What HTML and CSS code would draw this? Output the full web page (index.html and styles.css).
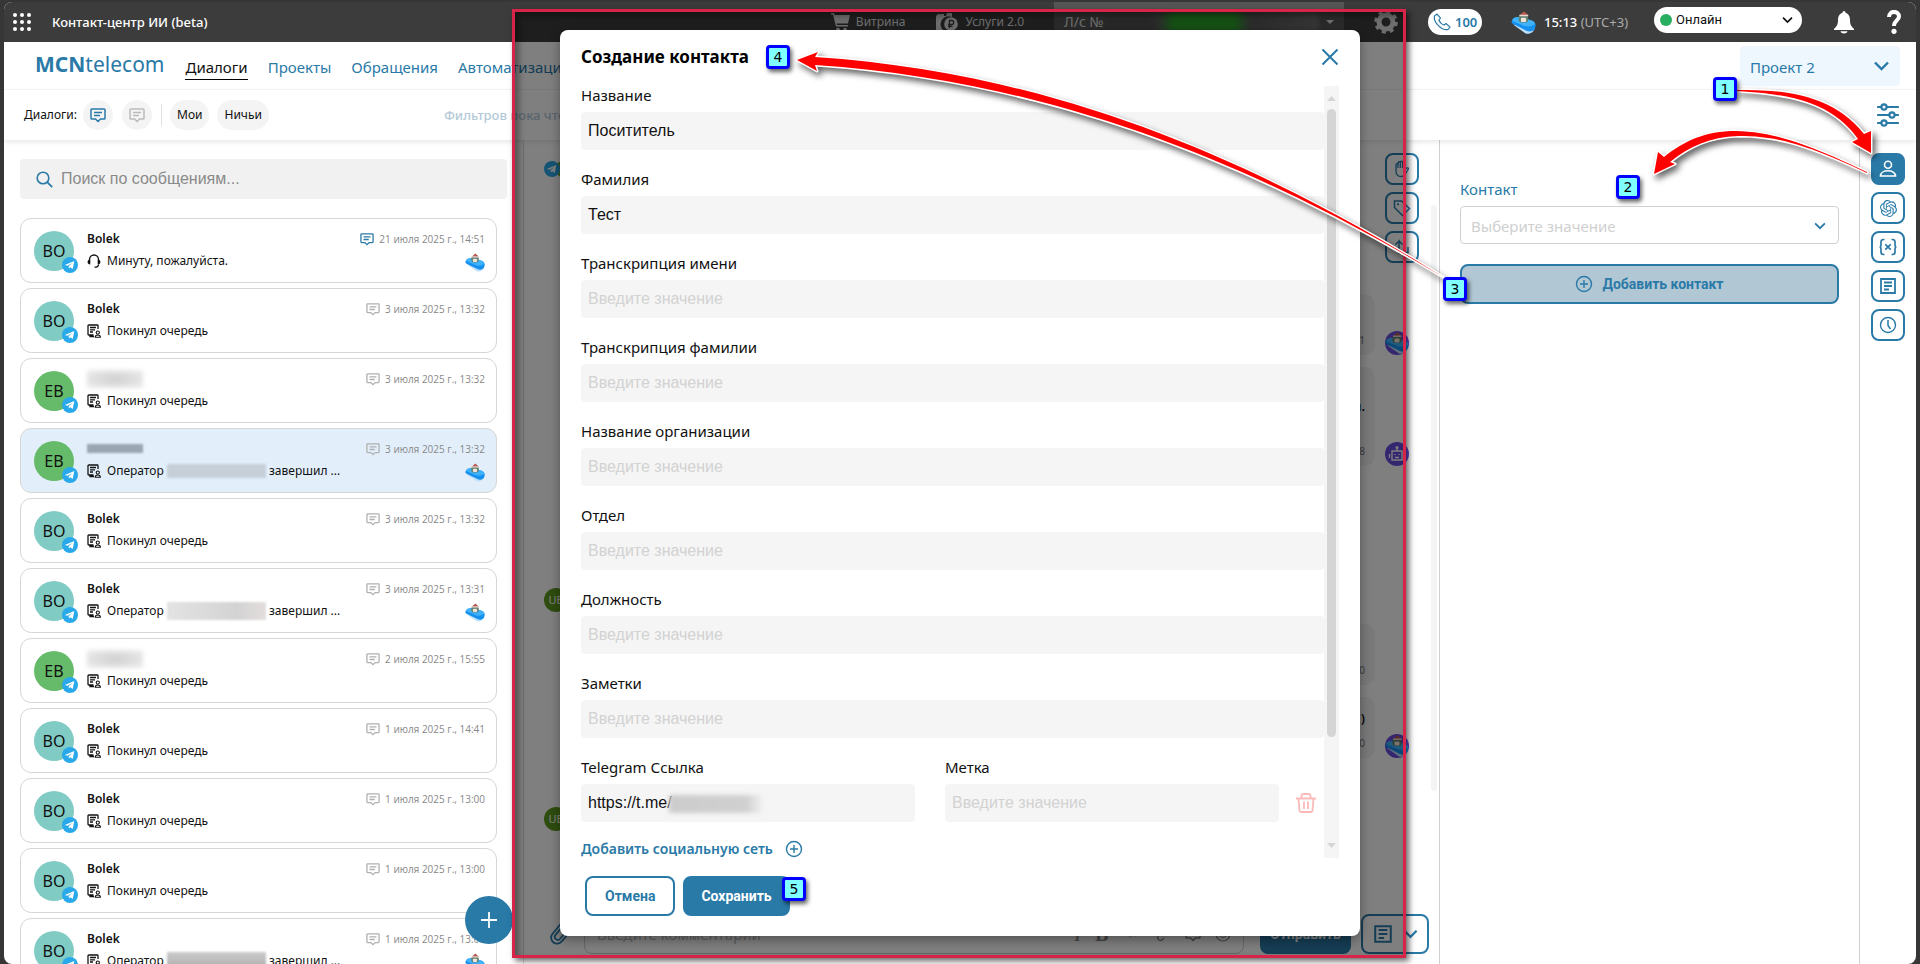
FILE: index.html
```html
<!DOCTYPE html>
<html lang="ru">
<head>
<meta charset="utf-8">
<title>Контакт-центр ИИ (beta)</title>
<link rel="stylesheet" href="styles.css">
</head>
<body>
<svg class="sprite" aria-hidden="true">
  <symbol id="chat" viewBox="0 0 16 15"><path d="M1.8 1h12.4a.8.8 0 0 1 .8.8v8.4a.8.8 0 0 1-.8.8H10.500L8 13.500 5.500 11H1.800a.8.8 0 0 1-.8-.8V1.800a.8.8 0 0 1 .8-.8zM4 4.500h8M4 7.500h6" fill="none" stroke="currentColor" stroke-width="1.500"/></symbol>
  <symbol id="tg" viewBox="0 0 16 16"><circle cx="8" cy="8" r="8" fill="#29a9ea"/><path d="M2.800 7.900 12.300 4 10.700 12 8.200 10.200 6.900 11.500 6.700 9.200 10.300 5.900 5.600 8.800z" fill="#fff"/></symbol>
  <symbol id="note" viewBox="0 0 14 14"><path d="M6.500 11H1.800a.8.8 0 0 1-.8-.8V1.800A.8.800 0 0 1 1.800 1h8.400a.8.800 0 0 1 .8.800V5M3 3.500h6M3 5.800h5M3 8h3M3 11v1.500h4" fill="none" stroke="currentColor" stroke-width="1.300"/><circle cx="10.800" cy="8.600" r="1.600" fill="none" stroke="currentColor" stroke-width="1.100"/><path d="M8.200 13.300c0-3 5.200-3 5.200 0z" fill="none" stroke="currentColor" stroke-width="1.100"/></symbol>
  <symbol id="head" viewBox="0 0 14 14"><path d="M2.500 9.500V5.500a4.500 4.500 0 0 1 9 0v4M11.500 10.500c0 1.800-1.500 2.700-4 2.700" fill="none" stroke="currentColor" stroke-width="1.300"/><path d="M3.200 5.500v5C1.500 10.500.6 9.500.6 8s.9-2.500 2.600-2.500zM10.800 5.500v5c1.700 0 2.600-1 2.600-2.500s-.9-2.500-2.600-2.500z" fill="currentColor"/></symbol>
  <symbol id="cloud" viewBox="0 0 24 22"><path d="M2 13l12 8.500c4 1 8-1 9-6z" fill="#bfe0fb"/><path d="M1 9C2 6 6 5.500 9 6l11 3c4 1.500 4.500 5 2.500 8.500-2 2.500-6 3-9.500.5L3 13C.5 12 0 11 1 9z" fill="#1590ee"/><path d="M1 9C2 6 6 5.500 9 6l11 3c2 1 3 2 3 3.500-3 2.500-7 3-11 1.500C8 12 4 11 1 9z" fill="#3fb2fb"/><rect x="7.500" y="3.500" width="9" height="7.500" rx="3" fill="#5d7f6c"/><rect x="9.500" y="6.500" width="5" height="4" rx="1" fill="#f1e3da"/><path d="M8 4 12.500.3l4.200 3.700z" fill="#b8564e"/><path d="M8 3.600h8.500v1.500H8z" fill="#e9d6d0"/></symbol>
  <symbol id="chev" viewBox="0 0 16 10"><path d="M1.500 1.500 8 8l6.500-6.500" fill="none" stroke="currentColor" stroke-width="2.400"/></symbol>
  <symbol id="plusc" viewBox="0 0 18 18"><circle cx="9" cy="9" r="7.500" fill="none" stroke="currentColor" stroke-width="1.400"/><path d="M9 5v8M5 9h8" stroke="currentColor" stroke-width="1.400"/></symbol>
  <symbol id="doc" viewBox="0 0 18 18"><path d="M2 2h14v14H2zM5 5.500h8M5 9h8M5 12.500h5" fill="none" stroke="currentColor" stroke-width="1.800"/></symbol>
</svg>

<div class="app">
  <header class="topbar">
    <button class="plain apps" aria-label="Приложения"><svg width="18" height="18" viewBox="0 0 18 18" fill="#fff"><circle cx="2" cy="2" r="2"/><circle cx="9" cy="2" r="2"/><circle cx="16" cy="2" r="2"/><circle cx="2" cy="9" r="2"/><circle cx="9" cy="9" r="2"/><circle cx="16" cy="9" r="2"/><circle cx="2" cy="16" r="2"/><circle cx="9" cy="16" r="2"/><circle cx="16" cy="16" r="2"/></svg></button>
    <span class="product">Контакт-центр ИИ (beta)</span>
    <div class="topright">
      <a class="toplink" href="#"><svg width="20" height="19" viewBox="0 0 20 19" fill="#ddd"><path d="M0 0h3l.6 2H19L17 10.500H5.500l.4 1.500H17v1.500H5L2 1.500H0z"/><circle cx="7" cy="16.500" r="1.800"/><circle cx="14" cy="16.500" r="1.800"/></svg>Витрина</a>
      <a class="toplink services" href="#"><svg width="22" height="20" viewBox="0 0 22 20"><path d="M0 4 2 2h6v2h2l1-3h5v4a8 8 0 0 0-9 13H0z" fill="#ddd"/><circle cx="15" cy="12" r="6.800" fill="#ddd"/><path d="M13.500 16V8.500h2.200a1.900 1.900 0 0 1 0 4H12M12 14.300h4.500" fill="none" stroke="#3c3c3c" stroke-width="1.300"/></svg>Услуги 2.0</a>
      <button class="account">Л/с №<span class="masked"></span><svg width="8" height="4" viewBox="0 0 8 4"><path d="M0 0h8L4 4z" fill="#ddd"/></svg></button>
      <button class="plain gear" aria-label="Настройки"><svg width="24" height="24" viewBox="0 0 24 24"><g fill="none" stroke="#ddd"><circle cx="12" cy="12" r="7" stroke-width="5"/><circle cx="12" cy="12" r="10.300" stroke-width="3" stroke-dasharray="4.100 4" /></g></svg></button>
      <button class="phone"><svg width="18" height="18" viewBox="0 0 18 18"><path d="M1.500 3 4 1l3.500 4L6 7c.5 2 3 4.500 5 5l2-1.500L17 14l-2 2.500C9 18 0 9 1.500 3z" fill="none" stroke="currentColor" stroke-width="1.200"/></svg>100</button>
      <svg class="weather" width="25" height="23"><use href="#cloud"/></svg>
      <span class="clock">15:13 <span>(UTC+3)</span></span>
      <div class="status"><i></i><select aria-label="Статус"><option>Онлайн</option></select><svg width="11" height="8"><use href="#chev"/></svg></div>
      <button class="plain bell" aria-label="Уведомления"><svg width="20" height="23" viewBox="0 0 20 23" fill="#fff"><path d="M10 0c1 0 1.500.8 1.500 1.800C15 3 16 6 16 9c0 5 1.500 6.500 4 9v1H0v-1c2.500-2.500 4-4 4-9 0-3 1-6 4.500-7.200C8.500.8 9 0 10 0zM6.500 20.300h7c-.5 3-6.500 3-7 0z"/></svg></button>
      <button class="plain help" aria-label="Помощь"><svg width="14" height="24" viewBox="0 0 14 24"><path d="M2 7C2 0 12 .5 12 6.500c0 4-5 4-5 9.500" fill="none" stroke="#fff" stroke-width="4"/><circle cx="7" cy="21.300" r="2.600" fill="#fff"/></svg></button>
    </div>
  </header>

  <div class="navbar">
    <a class="logo" href="#"><b>MCN</b>telecom</a>
    <nav>
      <a class="current" href="#">Диалоги</a><a href="#">Проекты</a><a href="#">Обращения</a><a href="#">Автоматизация</a>
    </nav>
    <div class="project"><select aria-label="Проект"><option>Проект 2</option></select><svg width="17" height="10"><use href="#chev"/></svg></div>
  </div>

  <div class="filterbar">
    <span class="flabel">Диалоги:</span>
    <button class="round blue" aria-label="Открытые"><svg width="16" height="15"><use href="#chat"/></svg></button>
    <button class="round" aria-label="Закрытые"><svg width="16" height="15"><use href="#chat"/></svg></button>
    <span class="sep"></span>
    <button class="chip">Мои</button>
    <button class="chip">Ничьи</button>
    <span class="nofilters">Фильтров пока что нет</span>
    <button class="plain sliders" aria-label="Фильтры"><svg width="22" height="24" viewBox="0 0 22 24"><g fill="#fff" stroke="currentColor" stroke-width="2.200"><path d="M1 4h20M1 12h20M1 20h20" stroke-linecap="round"/><circle cx="7" cy="4" r="2.600"/><circle cx="15" cy="12" r="2.600"/><circle cx="7" cy="20" r="2.600"/></g></svg></button>
  </div>

  <main>
    <aside class="sidebar">
      <label class="search"><svg width="17" height="17" viewBox="0 0 17 17"><circle cx="7" cy="7" r="5.800" fill="none" stroke="currentColor" stroke-width="1.600"/><path d="m11.200 11.200 5 5" stroke="currentColor" stroke-width="1.800"/></svg><input type="search" placeholder="Поиск по сообщениям..." aria-label="Поиск по сообщениям"></label>
      <ul class="dialogs">
        <li class="open"><span class="ava">BO<svg><use href="#tg"/></svg></span><div class="info"><b>Bolek</b><p><svg><use href="#head"/></svg>Минуту, пожалуйста.</p></div><div class="meta"><time><svg><use href="#chat"/></svg>21 июля 2025 г., 14:51</time><svg class="cl"><use href="#cloud"/></svg></div></li>
        <li><span class="ava">BO<svg><use href="#tg"/></svg></span><div class="info"><b>Bolek</b><p><svg><use href="#note"/></svg>Покинул очередь</p></div><div class="meta"><time><svg><use href="#chat"/></svg>3 июля 2025 г., 13:32</time></div></li>
        <li><span class="ava green">EB<svg><use href="#tg"/></svg></span><div class="info"><b class="hid"></b><p><svg><use href="#note"/></svg>Покинул очередь</p></div><div class="meta"><time><svg><use href="#chat"/></svg>3 июля 2025 г., 13:32</time></div></li>
        <li class="active"><span class="ava green">EB<svg><use href="#tg"/></svg></span><div class="info"><b class="hid dark"></b><p><svg><use href="#note"/></svg>Оператор <i></i> завершил ...</p></div><div class="meta"><time><svg><use href="#chat"/></svg>3 июля 2025 г., 13:32</time><svg class="cl"><use href="#cloud"/></svg></div></li>
        <li><span class="ava">BO<svg><use href="#tg"/></svg></span><div class="info"><b>Bolek</b><p><svg><use href="#note"/></svg>Покинул очередь</p></div><div class="meta"><time><svg><use href="#chat"/></svg>3 июля 2025 г., 13:32</time></div></li>
        <li><span class="ava">BO<svg><use href="#tg"/></svg></span><div class="info"><b>Bolek</b><p><svg><use href="#note"/></svg>Оператор <i></i> завершил ...</p></div><div class="meta"><time><svg><use href="#chat"/></svg>3 июля 2025 г., 13:31</time><svg class="cl"><use href="#cloud"/></svg></div></li>
        <li><span class="ava green">EB<svg><use href="#tg"/></svg></span><div class="info"><b class="hid"></b><p><svg><use href="#note"/></svg>Покинул очередь</p></div><div class="meta"><time><svg><use href="#chat"/></svg>2 июля 2025 г., 15:55</time></div></li>
        <li><span class="ava">BO<svg><use href="#tg"/></svg></span><div class="info"><b>Bolek</b><p><svg><use href="#note"/></svg>Покинул очередь</p></div><div class="meta"><time><svg><use href="#chat"/></svg>1 июля 2025 г., 14:41</time></div></li>
        <li><span class="ava">BO<svg><use href="#tg"/></svg></span><div class="info"><b>Bolek</b><p><svg><use href="#note"/></svg>Покинул очередь</p></div><div class="meta"><time><svg><use href="#chat"/></svg>1 июля 2025 г., 13:00</time></div></li>
        <li><span class="ava">BO<svg><use href="#tg"/></svg></span><div class="info"><b>Bolek</b><p><svg><use href="#note"/></svg>Покинул очередь</p></div><div class="meta"><time><svg><use href="#chat"/></svg>1 июля 2025 г., 13:00</time></div></li>
        <li><span class="ava">BO<svg><use href="#tg"/></svg></span><div class="info"><b>Bolek</b><p><svg><use href="#note"/></svg>Оператор <i class="deep"></i> завершил ...</p></div><div class="meta"><time><svg><use href="#chat"/></svg>1 июля 2025 г., 13:00</time><svg class="cl"><use href="#cloud"/></svg></div></li>
      </ul>
      <button class="fab" aria-label="Новый диалог"><svg width="16" height="16" viewBox="0 0 16 16"><path d="M8 0v16M0 8h16" stroke="#fff" stroke-width="1.800"/></svg></button>
    </aside>

    <section class="chat">
      <div class="chathead">
        <svg class="src" width="32" height="16" viewBox="0 0 32 16"><circle cx="19" cy="8" r="8" fill="#6fa32a"/><use href="#tg" width="16" height="16"/></svg>
        <div class="tools">
          <button class="tool" aria-label="Взять"><svg width="18" height="18" viewBox="0 0 18 18"><path d="M3 9V4.500q1-1.500 2 0V8 2.500q1.200-1.500 2.300 0V8 2q1.200-1.500 2.300 0v6-5q1.200-1.500 2.300 0v6.500L13.500 8q2-.5 2 .8L12 14.500Q11 16.500 8.500 16.500 3 16.500 3 11z" fill="none" stroke="currentColor" stroke-width="1.300"/></svg></button>
          <button class="tool" aria-label="Метка"><svg width="18" height="18" viewBox="0 0 18 18"><path d="M1.500 2h7l8 7.500-7 7-8-8z" fill="none" stroke="currentColor" stroke-width="1.500"/><circle cx="5" cy="5.300" r="1.100" fill="currentColor"/></svg></button>
          <button class="tool" aria-label="Передать"><svg width="18" height="18" viewBox="0 0 18 18"><path d="M6 16V3L2.500 6.500M6 3l3.500 3.500M15 9v5.500H8" fill="none" stroke="currentColor" stroke-width="1.500"/></svg></button>
        </div>
      </div>
      <div class="messages">
        <div class="msg out"><p><small>1</small></p><span class="who"><svg><use href="#cloud"/></svg></span></div>
        <div class="msg out tall"><p><span>и.</span><small>8</small></p><span class="who bot"><svg viewBox="0 0 18 18"><path d="M4 6h10v9H4zM9 6V2.500M1.500 9v4M16.500 9v4M7 9v1M11 9v1M7 12.500h4" fill="none" stroke="#fff" stroke-width="1.400"/><circle cx="9" cy="2.500" r="1.500" fill="#fff"/></svg></span></div>
        <div class="msg in first"><span class="ub">UB</span></div>
        <div class="msg out"><p><small>0</small></p><span class="who none"></span></div>
        <div class="msg out"><p>)<small>0</small></p><span class="who"><svg><use href="#cloud"/></svg></span></div>
        <div class="msg in"><span class="ub">UB</span></div>
      </div>
      <div class="track"><b></b></div>
      <div class="composer">
        <button class="plain clip" aria-label="Вложение"><svg width="34" height="38" viewBox="0 0 34 38"><path transform="rotate(40 17 19)" d="M11 7v18a6 6 0 0 0 12 0V5a4.500 4.500 0 0 0-9 0v19a3 3 0 0 0 6 0V8" fill="none" stroke="currentColor" stroke-width="1.800"/></svg></button>
        <div class="entry"><input type="text" placeholder="Введите комментарий" aria-label="Комментарий"><i>I</i><b>B</b><span>&lt;/&gt;</span>
          <svg width="15" height="15" viewBox="0 0 15 15"><path d="M6 9 9 6M5 6 2 9q-1 3 1 4t3 0l2-2M10 9l3-3q1-3-1-4t-3 0L7 4" fill="none" stroke="currentColor" stroke-width="1.300"/></svg>
          <svg width="16" height="15"><use href="#chat"/></svg>
          <svg width="16" height="16" viewBox="0 0 16 16"><circle cx="8" cy="8" r="7" fill="none" stroke="currentColor" stroke-width="1.200"/><path d="M4.500 9.500q3.500 4 7 0zM5.500 5v1.500M10.500 5v1.500" fill="none" stroke="currentColor"/></svg></div>
        <button class="btn primary send">Отправить</button>
        <button class="btn tmpl" aria-label="Шаблоны"><svg width="20" height="20"><use href="#doc"/></svg><svg width="15" height="10"><use href="#chev"/></svg></button>
      </div>
    </section>

    <section class="contact">
      <label for="pick">Контакт</label>
      <div class="pick"><select id="pick"><option>Выберите значение</option></select><svg width="12" height="8"><use href="#chev"/></svg></div>
      <button class="btn add"><svg width="18" height="18"><use href="#plusc"/></svg>Добавить контакт</button>
    </section>

    <div class="rail">
      <button class="tool on" aria-label="Контакт"><svg width="18" height="18" viewBox="0 0 18 18"><circle cx="9" cy="4.800" r="3.500" fill="none" stroke="currentColor" stroke-width="1.600"/><path d="M1.500 16c0-7 15-7 15 0z" fill="none" stroke="currentColor" stroke-width="1.600"/></svg></button>
      <button class="tool" aria-label="ИИ"><svg width="17" height="17" viewBox="0 0 24 24" fill="currentColor"><path d="M22.2819 9.8211a5.9847 5.9847 0 0 0-.5157-4.9108 6.0462 6.0462 0 0 0-6.5098-2.9A6.0651 6.0651 0 0 0 4.9807 4.1818a5.9847 5.9847 0 0 0-3.9977 2.9 6.0462 6.0462 0 0 0 .7427 7.0966 5.98 5.98 0 0 0 .511 4.9107 6.051 6.051 0 0 0 6.5146 2.9001A5.9847 5.9847 0 0 0 13.2599 24a6.0557 6.0557 0 0 0 5.7718-4.2058 5.9894 5.9894 0 0 0 3.9977-2.9001 6.0557 6.0557 0 0 0-.7475-7.0729zm-9.022 12.6081a4.4755 4.4755 0 0 1-2.8764-1.0408l.1419-.0804 4.7783-2.7582a.7948.7948 0 0 0 .3927-.6813v-6.7369l2.02 1.1686a.071.071 0 0 1 .038.052v5.5826a4.504 4.504 0 0 1-4.4945 4.4944zm-9.6607-4.1254a4.4708 4.4708 0 0 1-.5346-3.0137l.142.0852 4.783 2.7582a.7712.7712 0 0 0 .7806 0l5.8428-3.3685v2.3324a.0804.0804 0 0 1-.0332.0615L9.74 19.9502a4.4992 4.4992 0 0 1-6.1408-1.6464zM2.3408 7.8956a4.485 4.485 0 0 1 2.3655-1.9728V11.6a.7664.7664 0 0 0 .3879.6765l5.8144 3.3543-2.0201 1.1685a.0757.0757 0 0 1-.071 0l-4.8303-2.7865A4.504 4.504 0 0 1 2.3408 7.872zm16.5963 3.8558L13.1038 8.364 15.1192 7.2a.0757.0757 0 0 1 .071 0l4.8303 2.7913a4.4944 4.4944 0 0 1-.6765 8.1042v-5.6772a.79.79 0 0 0-.407-.667zm2.0107-3.0231l-.142-.0852-4.7735-2.7818a.7759.7759 0 0 0-.7854 0L9.409 9.2297V6.8974a.0662.0662 0 0 1 .0284-.0615l4.8303-2.7866a4.4992 4.4992 0 0 1 6.6802 4.66zM8.3065 12.863l-2.02-1.1638a.0804.0804 0 0 1-.038-.0567V6.0742a4.4992 4.4992 0 0 1 7.3757-3.4537l-.142.0805L8.704 5.459a.7948.7948 0 0 0-.3927.6813zm1.0976-2.3654l2.602-1.4998 2.6069 1.4998v2.9994l-2.5974 1.4997-2.6067-1.4997Z"/></svg></button>
      <button class="tool" aria-label="Переменные"><svg width="18" height="18" viewBox="0 0 18 18"><path d="M5.500 1.500H4.500q-2.500 0-2.500 2.500v3q0 1-.7 2 .7 1 .7 2v3q0 2.500 2.500 2.500h1M12.500 1.500h1q2.500 0 2.500 2.500v3q0 1 .7 2-.7 1-.7 2v3q0 2.500-2.500 2.500h-1M6.300 6.300l5.400 5.400M11.700 6.300l-5.400 5.400" fill="none" stroke="currentColor" stroke-width="1.700"/></svg></button>
      <button class="tool" aria-label="Заметки"><svg width="18" height="18"><use href="#doc"/></svg></button>
      <button class="tool" aria-label="История"><svg width="18" height="18" viewBox="0 0 18 18"><path d="M9 4v5.500l2.500 3.500" fill="none" stroke="currentColor" stroke-width="1.500"/><circle cx="9" cy="9" r="7.500" fill="none" stroke="currentColor" stroke-width="1.400"/></svg></button>
    </div>
  </main>
</div>

<div class="shade"></div>

<div class="layer">
  <form class="modal" role="dialog" aria-labelledby="mt">
    <div class="mhead"><h1 id="mt">Создание контакта</h1><button type="button" class="plain" aria-label="Закрыть"><svg width="18" height="18" viewBox="0 0 18 18"><path d="m1.500 1.500 15 15M16.500 1.500l-15 15" stroke="currentColor" stroke-width="2"/></svg></button></div>
    <div class="mbody">
      <div class="fields">
        <label>Название<input value="Посититель"></label>
        <label>Фамилия<input value="Тест"></label>
        <label>Транскрипция имени<input placeholder="Введите значение"></label>
        <label>Транскрипция фамилии<input placeholder="Введите значение"></label>
        <label>Название организации<input placeholder="Введите значение"></label>
        <label>Отдел<input placeholder="Введите значение"></label>
        <label>Должность<input placeholder="Введите значение"></label>
        <label>Заметки<input placeholder="Введите значение"></label>
        <div class="social">
          <label>Telegram Ссылка<span class="url"><input value="https://t.me/"><i></i></span></label>
          <label>Метка<input placeholder="Введите значение"></label>
          <button type="button" class="plain trash" aria-label="Удалить"><svg width="20" height="20" viewBox="0 0 20 20"><path d="M0 5.500h20M5.500 5V3q0-2 2-2h5q2 0 2 2v2M2.500 6l1 11.500q.1 1.500 1.500 1.500h10q1.400 0 1.500-1.500l1-11.500M8 8.500V16M12 8.500V16" fill="none" stroke="currentColor" stroke-width="1.800"/></svg></button>
        </div>
        <button type="button" class="plain more">Добавить социальную сеть<svg width="18" height="18"><use href="#plusc"/></svg></button>
      </div>
      <div class="bar"><svg width="9" height="5" viewBox="0 0 9 5"><path d="M0 5h9L4.500 0z" fill="#d5d5d5"/></svg><b></b><svg width="9" height="5" viewBox="0 0 9 5"><path d="M0 0h9L4.500 5z" fill="#d5d5d5"/></svg></div>
    </div>
    <div class="mfoot"><button type="button" class="btn">Отмена</button><button type="button" class="btn primary">Сохранить</button></div>
  </form>
</div>

<div class="notes">
  <svg width="1920" height="400" viewBox="0 0 1920 400" aria-hidden="true"><g fill="#f00" stroke="#fff" stroke-width="3" paint-order="stroke" stroke-linejoin="round">
    <path d="M1737 90C1790 89 1835 97 1864 134L1871 131 1871 153 1852 142 1858 139C1832 102 1790 94 1737 91z"/>
    <path d="M1867 172C1800 140 1770 132 1736 131 1705 131 1684 141 1664 157L1658 152 1654 174 1675 164 1670 162C1690 146 1710 137 1738 136 1772 136 1800 141 1867 173z"/>
    <path d="M797 60 818 52 815 57C1040 72 1240 150 1443 277 1235 152 1035 80 815 65L817 71z"/>
  </g></svg>
  <span class="n1">1</span><span class="n2">2</span><span class="n3">3</span><span class="n4">4</span><span class="n5">5</span>
</div>
</body>
</html>
```

FILE: styles.css
```css
* { box-sizing: border-box; }
:root { --blue: #2a7aa8; }
body { margin: 0; height: 100vh; background: #363636; padding: 2px 4px 0; position: relative; overflow: hidden; font: 13px/18px "Noto Sans", sans-serif; color: #111; }
button, input, select { font: inherit; color: inherit; border: 0; margin: 0; padding: 0; outline: 0; }
button { cursor: pointer; }
svg { flex: none; display: block; }
.sprite { position: absolute; width: 0; height: 0; }
select { appearance: none; background: none; }
.plain { background: none; display: flex; align-items: center; color: var(--blue); }
a { text-decoration: none; color: inherit; }

.app { height: 100%; display: flex; flex-direction: column; background: #fff; border-radius: 8px; overflow: hidden; }

/* top bar */
.topbar { height: 40px; background: #3c3c3c; display: flex; align-items: center; color: #fff; padding: 0 15px 0 9px; flex: none; }
.product { margin-left: 21px; font-weight: 500; }
.topright { margin-left: auto; display: flex; align-items: center; height: 100%; }
.toplink { display: flex; align-items: center; gap: 5px; color: #ddd; font-size: 12px; }
.services { margin: 0 30px 0 31px; gap: 7px; }
.account { height: 100%; width: 290px; background: #555; color: #ddd; display: flex; align-items: center; padding: 0 10px; font-size: 14px; }
.masked { flex: 1; height: 20px; margin: 0 7px 0 2px; filter: blur(2px); background: linear-gradient(90deg, #505050 20%, #575757 24%, #2aa02a 32%, #2aa02a 60%, #575757 68%, #6a6a6a); }
.gear { margin: 0 30px; }
.phone { width: 54px; height: 26px; border-radius: 13px; background: #fff; color: var(--blue); font-weight: 600; display: flex; align-items: center; gap: 4px; padding: 0 5px; }
.weather { margin: 0 8px 0 29px; }
.clock { width: 110px; color: #fff; font-size: 13px; font-weight: 500; }
.clock span { color: #aaa; font-weight: 400; }
.status { position: relative; width: 148px; height: 26px; margin-bottom: 4px; background: #fff; border-radius: 13px; color: #111; font-family: Roboto, sans-serif; }
.status select { width: 100%; height: 100%; padding-left: 22px; }
.status i { position: absolute; left: 6px; top: 7px; width: 12px; height: 12px; border-radius: 50%; background: #27ae60; }
.status svg { position: absolute; right: 9px; top: 9px; }
.bell { margin: 0 33px 0 32px; }

/* navigation */
.navbar { display: flex; align-items: center; height: 48px; padding: 4px 16px 4px 31px; border-bottom: 1px solid #f7f7f7; color: var(--blue); flex: none; }
.logo { font-size: 21px; line-height: 28px; margin-bottom: 4px; }
nav { display: flex; gap: 20px; margin-left: 21px; font-size: 15px; padding-top: 4px; }
nav a { line-height: 24px; border-bottom: 1px solid transparent; }
nav .current { color: #111; border-color: #000; }
.project { margin-left: auto; position: relative; width: 160px; height: 40px; background: #eff7fe; border-radius: 4px; }
.project select { width: 100%; height: 100%; padding: 3px 10px 0; font-size: 15px; }
.project svg { position: absolute; right: 10px; top: 15px; }

.filterbar { display: flex; align-items: center; height: 50px; padding: 0 17px 0 20px; box-shadow: 0 2px 5px rgba(0,0,0,.1); position: relative; flex: none; font-size: 12px; }
.flabel { width: 59px; }
.round { width: 30px; height: 30px; border-radius: 50%; background: #f4f4f4; display: flex; align-items: center; justify-content: center; color: #bbb; margin-right: 9px; }
.round.blue { color: var(--blue); }
.sep { width: 1px; height: 22px; background: #e2e2e2; margin-right: 8px; }
.chip { height: 30px; padding: 0 7px; border-radius: 15px; background: #f4f4f4; margin-right: 8px; }
.nofilters { margin-left: 167px; color: #b3c9d8; font-size: 13px; font-weight: 500; }
.sliders { margin-left: auto; }

main { flex: 1; min-height: 0; display: flex; }

/* dialog list */
.sidebar { width: 519px; padding: 19px 15px 0 16px; position: relative; overflow: hidden; flex: none; }
.search { display: flex; align-items: center; gap: 8px; height: 40px; padding: 0 16px; background: #f1f1f1; border-radius: 4px; color: var(--blue); font: 16px "Liberation Sans", Arial, sans-serif; margin-right: 1px; }
.search input { flex: 1; background: none; color: #777; }
.search input::placeholder { color: #8a8a8a; }
.dialogs { list-style: none; margin: 19px 11px 0 0; padding: 0; display: flex; flex-direction: column; gap: 5px; }
.dialogs li { height: 65px; border: 1px solid #d6d6d6; border-radius: 11px; display: flex; padding: 11px 11px 0 13px; font-size: 12px; line-height: 18px; }
.dialogs .active { background: #e2effb; }
.ava { position: relative; width: 40px; height: 40px; border-radius: 50%; background: #80cbc4; font-size: 16px; line-height: 40px; text-align: center; margin-top: 1px; flex: none; }
.ava.green { background: #66bb6a; }
.ava svg { position: absolute; right: -4px; bottom: -2px; width: 16px; height: 16px; }
.info { flex: 1; padding-left: 13px; }
.info b { display: block; font-weight: 600; margin-bottom: 4px; }
.info p { margin: 0; display: flex; align-items: center; white-space: pre; }
.info p svg { width: 14px; height: 14px; margin-right: 6px; }
.info i { width: 99px; height: 18px; background: linear-gradient(90deg, #e3e3e3, #d3d3d3 70%, #e3dddd); filter: blur(1px); }
.active .info i { background: #c6cfd8; height: 14px; }
.info i.deep { background: linear-gradient(#ccc, #aaa); }
.info .hid { width: 56px; height: 18px; background: radial-gradient(#d0d0d0, #eee); filter: blur(2px); }
.info .dark { height: 9px; margin: 4px 0 9px; background: #9aa7b3; filter: blur(1px); }
.meta { display: flex; flex-direction: column; align-items: flex-end; color: #888; font: 10px/18px "Open Sans", "Noto Sans", sans-serif; }
.meta time { display: flex; align-items: center; gap: 5px; }
.meta time svg { width: 14px; height: 13px; color: #b0b0b0; }
.open time svg { color: var(--blue); }
.meta .cl { width: 20px; height: 19px; margin-top: 5px; }
.fab { position: absolute; right: 10px; bottom: 20px; width: 48px; height: 48px; border-radius: 50%; background: var(--blue); display: flex; align-items: center; justify-content: center; }

/* conversation */
.chat { flex: 1; border-left: 1px solid #ddd; position: relative; display: flex; flex-direction: column; min-width: 0; }
.chathead { display: flex; justify-content: space-between; padding: 13px 20px 0 20px; }
.src { margin-top: 8px; }
.tools, .rail { display: flex; flex-direction: column; gap: 7px; }
.tool { width: 34px; height: 32px; border: 2px solid var(--blue); border-radius: 8px; background: #fff; color: var(--blue); display: flex; align-items: center; justify-content: center; }
.tool.on { background: var(--blue); color: #fff; }
.messages { padding: 31px 30px 0 20px; display: flex; flex-direction: column; gap: 12px; flex: 1; }
.msg { display: flex; align-items: flex-end; height: 61px; }
.msg.tall { height: 99px; }
.msg.first { height: 134px; }
.out { justify-content: flex-end; gap: 10px; }
.out p { margin: 0; width: 420px; height: 100%; border-radius: 10px; background: #f3f3f3; padding: 12px 10px 6px; text-align: right; display: flex; flex-direction: column; font-weight: 600; }
.tall p { padding-top: 30px; }
.out small { font-size: 10px; font-weight: 400; color: #777; line-height: 18px; margin-top: auto; }
.who, .ub { width: 24px; height: 24px; border-radius: 50%; background: #6b4ce0; display: flex; align-items: center; justify-content: center; overflow: hidden; flex: none; }
.who.none { background: none; }
.who svg { width: 24px; height: 22px; }
.bot svg { width: 18px; height: 18px; }
.ub { background: #5f9a1e; color: #fff; font-size: 11px; }
.track { position: absolute; right: 2px; top: 65px; width: 6px; height: 586px; }
.track b { display: block; height: 100%; border-radius: 3px; background: #f4f4f4; }
.composer { display: flex; align-items: flex-end; padding: 0 10px 10px 20px; }
.clip { width: 30px; height: 42px; }
.entry { flex: 1; height: 40px; margin: 0 16px 0 10px; border: 1px solid #ccc; border-radius: 8px; display: flex; align-items: center; gap: 14px; padding: 0 12px; color: #888; font: 20px "Liberation Serif", serif; }
.entry span { font-size: 14px; }
.entry input { flex: 1; min-width: 0; height: 30px; background: none; font: 15px "Noto Sans", sans-serif; }
.entry input::placeholder { color: #bbb; }
.btn { height: 40px; border: 2px solid var(--blue); border-radius: 8px; background: #fff; color: var(--blue); font: bold 14px Roboto, sans-serif; display: flex; align-items: center; justify-content: center; padding: 0 18px; }
.primary { background: var(--blue); color: #fff; padding: 0 16px; }
.send { width: 91px; padding: 0; margin-right: 10px; }
.tmpl { width: 68px; gap: 10px; padding: 0; }

/* contact panel */
.contact { width: 421px; border-left: 1px solid #d0d0d0; border-right: 1px solid #d0d0d0; padding: 37px 20px 0; color: var(--blue); flex: none; }
.contact label { display: block; font-size: 15px; line-height: 24px; margin-bottom: 5px; }
.pick { position: relative; height: 38px; margin-bottom: 20px; border: 1px solid #d0d0d0; border-radius: 4px; }
.pick select { width: 100%; height: 100%; padding: 2px 10px 0; font-size: 15px; color: #d0d0d0; }
.pick svg { position: absolute; right: 12px; top: 15px; }
.add { width: 100%; gap: 9px; background: #b2c7d4; }
.rail { padding: 13px 11px; }

/* dimmed area */
.shade { position: absolute; left: 512px; right: 514px; top: 9px; bottom: 6px; border: 3px solid #d9244a; background: rgba(0,0,0,.5); box-shadow: 3px 3px 6px rgba(0,0,0,.6), inset 4px 4px 6px rgba(0,0,0,.35); }

/* dialog window */
.layer { position: absolute; left: 0; right: 0; top: 30px; display: flex; justify-content: center; }
.modal { width: 800px; background: #fff; border-radius: 8px; padding: 0 21px 20px; box-shadow: 0 4px 12px rgba(0,0,0,.35); }
.mhead { display: flex; justify-content: space-between; align-items: center; height: 56px; padding-bottom: 2px; }
.mhead h1 { margin: 0; font-size: 17px; line-height: 24px; color: #000; }
.mbody { display: flex; height: 772px; }
.fields { flex: 1; min-width: 0; display: flex; flex-direction: column; gap: 20px; }
.fields label { display: flex; flex-direction: column; font-size: 15px; line-height: 18px; gap: 8px; }
.fields input { height: 38px; width: 100%; background: #f5f5f5; border-radius: 4px; padding: 0 7px; font: 16px "Liberation Sans", Arial, sans-serif; }
.fields input::placeholder { color: #d2d2d2; }
.social { display: grid; grid-template-columns: 334px 334px 15px; column-gap: 30px; align-items: end; }
.social .trash { height: 38px; color: #fbb9b9; margin-left: -13px; }
.url { position: relative; }
.url i { position: absolute; left: 88px; top: 11px; width: 96px; height: 18px; background: linear-gradient(90deg, #ccc, #d0d0d0 80%, #f5f5f5); filter: blur(2px); }
.more { gap: 12px; font-size: 14px; line-height: 18px; font-weight: 600; margin-top: -2px; }
.bar { width: 15px; flex: none; background: #f5f5f5; display: flex; flex-direction: column; align-items: center; padding: 10px 0; }
.bar b { width: 9px; height: 628px; border-radius: 5px; background: #d5d5d5; margin: 8px 0 auto; }
.mfoot { display: flex; gap: 8px; padding: 18px 4px 0; }

/* numbered callouts */
.notes { position: absolute; left: 0; top: 0; pointer-events: none; }
.notes svg { filter: drop-shadow(3px 4px 3px rgba(0,0,0,.6)); }
.notes span { position: absolute; width: 24px; height: 24px; border: 3px solid #00f; border-radius: 4px; background: #80ffff; color: #000; font: 14px/18px "DejaVu Sans", sans-serif; text-align: center; box-shadow: 2px 3px 4px rgba(0,0,0,.6); }
.notes .n1 { left: 1713px; top: 77px; }
.notes .n2 { left: 1616px; top: 175px; }
.notes .n3 { left: 1443px; top: 277px; }
.notes .n4 { left: 766px; top: 45px; }
.notes .n5 { left: 782px; top: 877px; }
```
